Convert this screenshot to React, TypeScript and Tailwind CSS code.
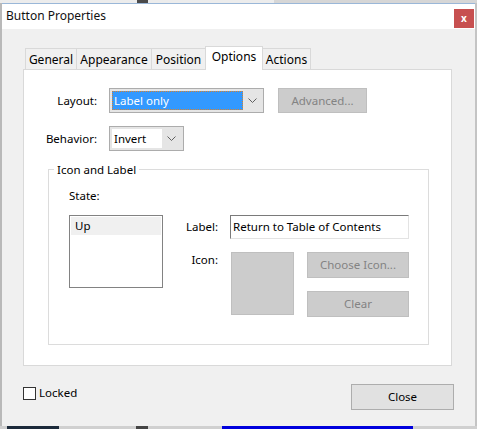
import { useState } from "react";

const Chevron = () => (
  <svg width="9" height="5" viewBox="0 0 9 5" className="text-[#606060]">
    <path d="M0.5 0.5 L4.5 4.5 L8.5 0.5" fill="none" stroke="currentColor" strokeWidth="1" />
  </svg>
);

const tabs = [
  { name: "General", w: "w-[52px]" },
  { name: "Appearance", w: "w-[76px]" },
  { name: "Position", w: "w-[55px]" },
  { name: "Options", w: "w-[58px]" },
  { name: "Actions", w: "w-[49px]" },
];

const DisabledButton = ({ label, className }: { label: string; className: string }) => (
  <div
    className={`flex items-center justify-center border border-[#bfbfbf] bg-[#cccccc] text-[#838383] ${className}`}
  >
    {label}
  </div>
);

export default function App() {
  const [active] = useState("Options");

  return (
    <div
      className="flex h-[429px] w-[477px] flex-col overflow-hidden bg-[#c8c8c8] text-[11.5px] leading-[16px] text-black"
      style={{ fontFamily: '"Noto Sans", "Open Sans", sans-serif' }}
    >
      {/* background strip above the dialog */}
      <div className="flex h-[3px] bg-[#ececec]">
        <div className="ml-[137px] w-[11px] bg-[#4a4a4a]" />
        <div className="ml-[126px] w-[210px] bg-[#d6d6d6]" />
      </div>

      <div className="flex h-[423px]">
        <div className="w-[2px] bg-[#b9b9b9]" />

        {/* Dialog */}
        <div className="flex w-[473px] flex-col border-t border-[#9ab7d8] bg-[#f0f0f0]">
          {/* Title bar */}
          <div className="flex h-[25px] items-center justify-between bg-white pl-[4px] pr-[1px]">
            <span className="-mt-[2px] text-[12px] text-[#111]">Button Properties</span>
            <div className="mt-[3px] flex h-[19px] w-[20px] items-center justify-center bg-[#c75050] pb-[1px] text-[10px] font-bold leading-none text-white">
              x
            </div>
          </div>

          {/* Body */}
          <div className="flex flex-1 flex-col pl-[21px] pr-[23px] pt-[17px]">
            {/* Tabs */}
            <div className="ml-[2px] flex h-[23px] items-end">
              {tabs.map((t, i) =>
                t.name === active ? (
                  <div
                    key={t.name}
                    className={`relative z-10 -ml-px mb-[-1px] flex h-[24px] items-start justify-center border border-b-0 border-[#d9d9d9] bg-white pt-[2px] text-[12px] ${t.w}`}
                  >
                    {t.name}
                  </div>
                ) : (
                  <div
                    key={t.name}
                    className={`flex h-[21px] items-center justify-center border border-b-0 border-[#d9d9d9] bg-[#f0f0f0] pt-[1px] text-[12px] ${i > 0 ? "-ml-px" : ""} ${t.w}`}
                  >
                    {t.name}
                  </div>
                ),
              )}
            </div>

            {/* Tab panel */}
            <div className="h-[297px] w-[429px] border border-[#d9d9d9] bg-white pt-[18px]">
              {/* Layout row */}
              <div className="flex h-[25px] items-center">
                <div className="w-[73px] text-right">Layout:</div>
                <div className="ml-[12px] flex h-[25px] w-[155px] items-center border border-[#acacac] bg-[#e5e5e5] p-[2px]">
                  <div className="flex h-full flex-1 items-center border border-dotted border-[#d9822b] bg-[#3399ff] pl-[1px] text-white">
                    Label only
                  </div>
                  <div className="flex w-[18px] justify-center">
                    <Chevron />
                  </div>
                </div>
                <DisabledButton label="Advanced..." className="ml-[14px] h-[25px] w-[89px]" />
              </div>

              {/* Behavior row */}
              <div className="mt-[13px] flex h-[25px] items-center">
                <div className="w-[73px] text-right">Behavior:</div>
                <div className="ml-[12px] flex h-[25px] w-[75px] items-center border border-[#acacac] bg-[#e5e5e5] p-[2px]">
                  <div className="flex h-full flex-1 items-center bg-white pl-[2px]">Invert</div>
                  <div className="flex w-[19px] justify-center">
                    <Chevron />
                  </div>
                </div>
              </div>

              {/* Icon and Label group */}
              <div className="relative ml-[24px] mt-[18px] h-[176px] w-[381px] border border-[#dcdcdc] pl-[20px] pt-[18px]">
                <span className="absolute -top-[8px] left-[5px] bg-white px-[3px]">Icon and Label</span>
                <div className="flex">
                  <div className="flex flex-col">
                    <div>State:</div>
                    <div className="mt-[11px] h-[73px] w-[94px] border border-[#828282] p-[1px]">
                      <div className="h-[18px] bg-[#f0f0f0] pl-[4px] leading-[18px]">Up</div>
                    </div>
                  </div>

                  <div className="ml-[8px] mt-[27px] flex flex-col">
                    <div className="flex h-[24px] items-center">
                      <div className="w-[47px] text-right">Label:</div>
                      <div className="ml-[12px] flex h-[24px] w-[179px] items-center border border-b-[#e3e3e3] border-l-[#7a7a7a] border-r-[#e3e3e3] border-t-[#7a7a7a] pl-[2px]">
                        Return to Table of Contents
                      </div>
                    </div>
                    <div className="mt-[13px] flex">
                      <div className="w-[47px] text-right">Icon:</div>
                      <div className="ml-[13px] h-[63px] w-[63px] border border-[#bfbfbf] bg-[#cccccc]" />
                      <div className="ml-[13px] flex flex-col">
                        <DisabledButton label="Choose Icon..." className="h-[26px] w-[102px]" />
                        <DisabledButton label="Clear" className="mt-[13px] h-[26px] w-[102px]" />
                      </div>
                    </div>
                  </div>
                </div>
              </div>
            </div>

            {/* Footer */}
            <div className="mt-[18px] flex items-start justify-between">
              <div className="mt-[1px] flex items-center">
                <div className="h-[13px] w-[13px] border border-[#333333] bg-white" />
                <span className="ml-[3px]">Locked</span>
              </div>
              <div className="-mr-[2px] flex h-[26px] w-[103px] items-center justify-center border border-[#adadad] bg-[#e1e1e1]">
                Close
              </div>
            </div>
          </div>
        </div>

        <div className="w-[2px] bg-[#c4c4c4]" />
      </div>

      {/* background strip below the dialog */}
      <div className="flex h-[3px] bg-[#d0d0d0]">
        <div className="ml-[7px] w-[52px] bg-[#1c2a3a]" />
        <div className="ml-[77px] w-[12px] bg-[#444444]" />
        <div className="ml-[74px] w-[191px] bg-[#0000dd]" />
      </div>
    </div>
  );
}
